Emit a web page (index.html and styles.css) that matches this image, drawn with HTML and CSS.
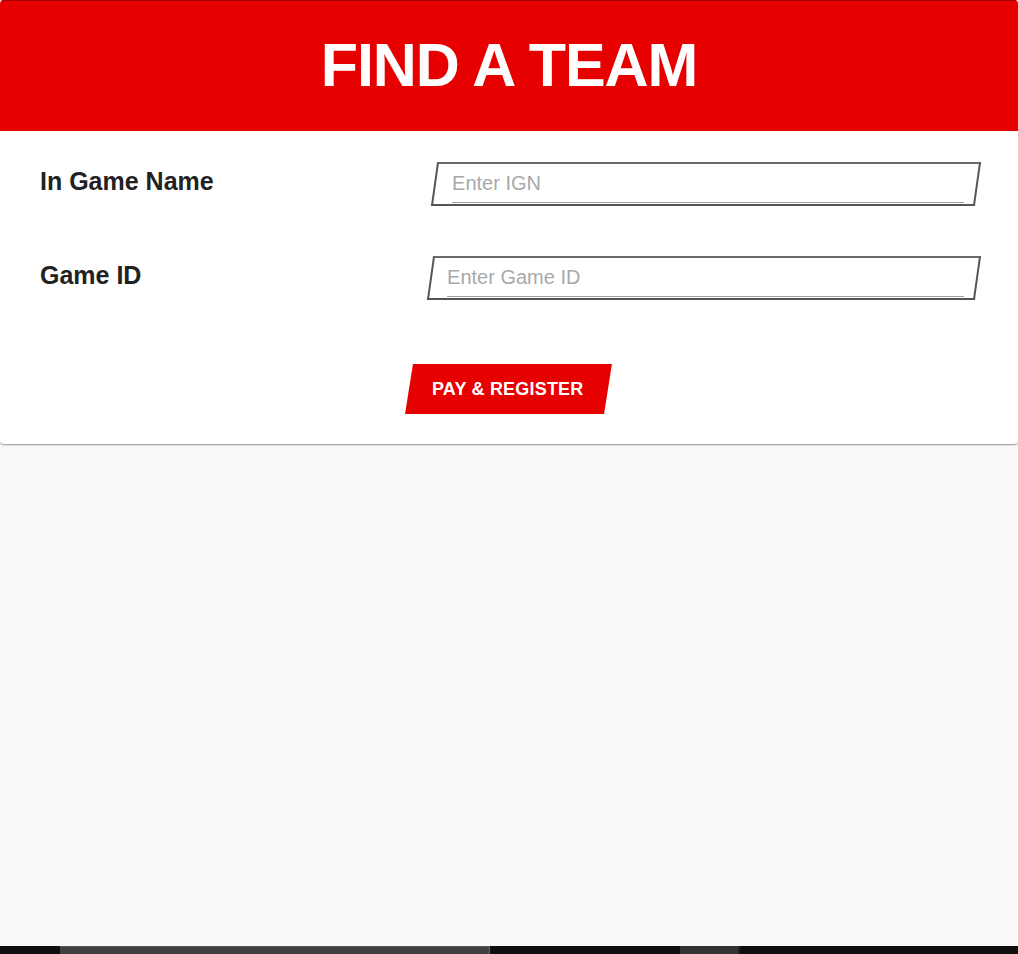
FILE: index.html
```html
<!DOCTYPE html>
<html lang="en">
<head>
<meta charset="utf-8">
<title>Find a Team</title>
<link rel="stylesheet" href="styles.css">
</head>
<body>
<main class="page">
  <section class="card">
    <header class="card-header">
      <h1 class="title">FIND A TEAM</h1>
    </header>
    <form class="card-body">
      <div class="row">
        <label class="label label-ign" for="ign">In Game Name</label>
        <div class="field">
          <input class="input input-ign" id="ign" type="text" placeholder="Enter IGN">
        </div>
      </div>
      <div class="row row-second">
        <label class="label label-id" for="gid">Game ID</label>
        <div class="field">
          <input class="input input-id" id="gid" type="text" placeholder="Enter Game ID">
        </div>
      </div>
      <div class="actions">
        <button class="btn" type="button"><span class="btn-text">PAY &amp; REGISTER</span></button>
      </div>
    </form>
  </section>
  <div class="spacer"></div>
  <div class="scrollbar">
    <div class="sb-gap1"></div>
    <div class="sb-thumb"></div>
    <div class="sb-gap2"></div>
    <div class="sb-thumb2"></div>
    <div class="sb-rest"></div>
  </div>
</main>
</body>
</html>
```

FILE: styles.css
```css
html, body {
  margin: 0;
  padding: 0;
}
body {
  background: #fafafa;
  font-family: "Liberation Sans", Arial, sans-serif;
}
.page {
  min-height: 100vh;
  display: flex;
  flex-direction: column;
}
.card {
  background: #fff;
  border-radius: 4px;
  overflow: hidden;
  box-shadow: 0 1px 3px rgba(0,0,0,0.2), 0 1px 1px rgba(0,0,0,0.14), 0 2px 1px -1px rgba(0,0,0,0.12);
}
.card-header {
  background: #e60000;
  border-top: 1px solid #a30000;
  height: 130px;
  display: flex;
  align-items: center;
  justify-content: center;
}
.title {
  margin: 0;
  color: #fff;
  font-size: 61px;
  font-weight: 700;
  letter-spacing: -1.1px;
  line-height: 1;
  padding-bottom: 2px;
}
.card-body {
  margin: 0;
  padding: 31px 40px 30px 40px;
  display: flex;
  flex-direction: column;
}
.row {
  display: flex;
  align-items: center;
  height: 44px;
}
.row-second {
  margin-top: 50px;
}
.label {
  font-size: 25px;
  font-weight: 700;
  color: #222;
  flex: none;
  margin-top: -5px;
}
.label-ign {
  width: 394px;
}
.label-id {
  width: 390px;
}
.field {
  flex: 1;
  height: 44px;
  box-sizing: border-box;
  border: 2px solid #555;
  border-top-color: #6a6a6a;
  transform: skewX(-8deg);
  display: flex;
  background: #fff;
}
.input {
  transform: skewX(8deg);
  flex: 1;
  min-width: 0;
  border: none;
  border-bottom: 1px solid #a0a0a0;
  margin: 0 12px 1px 16px;
  padding: 0;
  font-family: "Liberation Sans", Arial, sans-serif;
  font-size: 20px;
  color: #333;
  background: transparent;
  outline: none;
}
.input-id {
  margin-left: 15px;
}
.input::placeholder {
  color: #a8a8a8;
}
.actions {
  margin-top: 64px;
  display: flex;
  justify-content: center;
  padding-right: 2px;
}
.btn {
  width: 199px;
  height: 50px;
  border: none;
  background: #e60000;
  transform: skewX(-9deg);
  padding: 0;
  cursor: pointer;
}
.btn-text {
  display: inline-block;
  transform: skewX(9deg);
  color: #fff;
  font-family: "Liberation Sans", Arial, sans-serif;
  font-weight: 700;
  font-size: 18px;
  letter-spacing: 0.2px;
  margin-left: -2px;
  padding-top: 1px;
}
.spacer {
  flex: 1;
}
.scrollbar {
  height: 8px;
  background: #0f0f0f;
  display: flex;
}
.sb-gap1 {
  width: 60px;
}
.sb-thumb {
  width: 430px;
  background: #404040;
  border-top: 1px solid #5a5a5a;
  border-right: 1px solid #666;
  box-sizing: border-box;
}
.sb-gap2 {
  width: 190px;
}
.sb-thumb2 {
  width: 60px;
  background: #333;
  border-right: 2px solid #222;
  box-sizing: border-box;
}
.sb-rest {
  flex: 1;
}
```
